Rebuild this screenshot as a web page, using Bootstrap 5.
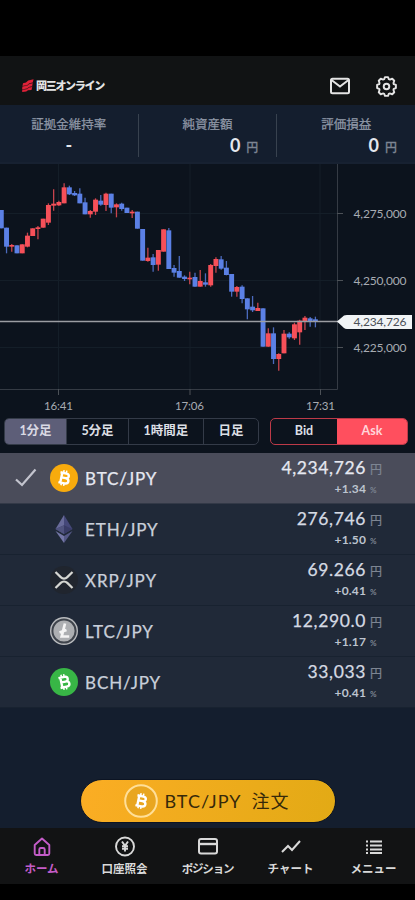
<!DOCTYPE html>
<html lang="ja">
<head>
<meta charset="utf-8">
<meta name="viewport" content="width=device-width, initial-scale=1">
<title>BTC/JPY</title>
<link href="https://cdn.jsdelivr.net/npm/bootstrap@5.3.0/dist/css/bootstrap.min.css" rel="stylesheet">
<style>
body{background:#000;color:#d5d9e2;font-family:Lato,"Noto Sans CJK JP",sans-serif;line-height:1;height:900px;overflow:hidden}
.app{height:884px;padding-top:56px;background:#000}
.topbar{height:49px;background:#111314;padding:11px 17px 0 22px}
.brand-name{font:900 11px/14px "Noto Sans CJK JP",sans-serif;letter-spacing:-1.3px;color:#e4e4e4;margin-left:2px;margin-top:-2px}
.mail,.gear{margin-top:8px}
.summary{height:57px;background:#141e2e}
.summary-cell{width:138.5px;padding-top:12px}
.rule{width:1px;height:43px;margin-top:9px;background:#38424f}
.s-label{font-size:12.5px;line-height:16px;color:#8f97a6;text-align:center;-webkit-text-stroke:.25px #8f97a6}
.s-value{font-size:18px;line-height:20px;margin-top:2px;color:#e4e7ed;font-weight:700;padding-right:18px}
.s-value small{font-size:12px;color:#7d8593;font-weight:500;margin-left:6px;-webkit-text-stroke:.25px #7d8593}
.chart-area{height:250px;background:#0c131d;border-top:2px solid #172131}
.chart-area text{font-family:Lato,sans-serif;fill:#a7abb2}
.controls{height:41px;background:#0c131d;padding:6px 7px 0 4px}
.seg{height:27px;border:1px solid #343b48;border-radius:5px;overflow:hidden;font-size:12.5px;color:#dcdfe5;font-weight:700}
.seg>div{border-right:1px solid #343b48;display:flex;align-items:center;justify-content:center}
.seg>div:last-child{border-right:0}
.seg .chosen{background:#5d5e78;color:#d9d9e4}
.w-min1{width:62px}.w-hour{width:75px}.w-day{width:54px}
.side{border:1.5px solid #bd3a48;width:138px}
.side>.bid{width:66px;border:0}
.side>.picked{flex:1;background:#ff4f5e;color:#ffd5da}
.pair{height:51px;background:#202938;border-bottom:1px solid #182230;padding-right:32px}
.pair.selected{background:#4a4c5a;border-color:#333947}
.tick{width:50px;padding-left:14px}
.coin{width:28px;height:28px;display:block}
.pair-name{font-size:17px;letter-spacing:.9px;margin-left:7px;color:#c9cfda;-webkit-text-stroke:.25px currentColor}
.selected .pair-name,.selected .price{color:#e6e8f1}
.price{font-size:17.5px;line-height:20px;letter-spacing:.62px;color:#d5dae3;height:21px;-webkit-text-stroke:.25px currentColor}
.rate{font-size:12px;line-height:16px;font-weight:700;color:#bdc4cf;margin-top:2px;letter-spacing:.15px}
.unit{display:inline-block;width:17px;padding-left:4px;font-size:12px;letter-spacing:0;color:#7d8592;text-align:left}
.pct{font-size:8px}
.order-area{height:120px;background:#141e2e;padding-top:71px}
.order{width:256px;height:44px;border-radius:22px;border:1px solid #0c1423;background:linear-gradient(105deg,#fbad24,#e2aa15);color:#35290a;font-size:18px;letter-spacing:1px;padding:0 0 0 43px}
.order-pair{margin-left:7px}.order-verb{margin-left:10px}
.tabs-bottom{height:56px;background:#121314;color:#d9d9d9;font-weight:700;font-size:11.5px}
.tabs-bottom>div{width:20%;padding-top:8px}
.tabs-bottom svg{display:block;width:22px;height:22px;margin-bottom:4px}
.tabs-bottom span{line-height:14px;white-space:nowrap}
.tabs-bottom .tight{letter-spacing:-1.2px}
.tabs-bottom .now{color:#c45cc8}
</style>
<script src="https://cdn.jsdelivr.net/npm/bootstrap@5.3.0/dist/js/bootstrap.bundle.min.js"></script>
</head>
<body>
<svg class="d-none">
  <symbol id="btc" viewBox="0 0 16 16"><g fill="none" stroke="currentColor" transform="rotate(12 8 8)"><path d="M5.8 3.9v8.200M4.300 4.100h4.900c3 0 3 3.800 0 3.800H6M9.200 7.900c3.700 0 3.700 4.200 0 4.200H4.300" stroke-width="1.900"/><path d="M6.800 1.800v2.400M9 1.800v2.400M6.800 11.800v2.400M9 11.800v2.400" stroke-width="1.250"/></g></symbol>
</svg>
<main class="app">
  <header class="topbar d-flex align-items-start">
    <div class="d-flex align-items-center mt-2 pt-1">
      <svg width="12" height="13" viewBox="0 0 12 13"><path d="M1 4.2 4 3.5 6.2 1.4 11.6.3 10.7 3.4 7.3 4.2 5.400 6 .5 7ZM.4 7.600l5-1L7.400 5l3.300-.8-.6 3L6.800 8 5 9.600.1 10.500ZM.2 11l5-1L7 8.600l3.200-.7-.7 3L6 11.300 4.300 12.600.2 13Z" fill="#df2238"/><path d="m1 7.300 4.400-.9L7.200 5l3.800-.9M.5 10.800l4.700-1L7 8.400l3.500-.8" stroke="#8a1a2a" stroke-width=".5" fill="none"/></svg>
      <div class="brand-name">岡三オンライン</div>
    </div>
    <svg class="mail ms-auto" width="22" height="22" viewBox="0 0 22 22" fill="none" stroke="#e4e4e4" stroke-width="2"><rect x="2" y="3.700" width="18" height="14.600" rx="1.500"/><path d="m2.500 5 8.500 6.500L19.500 5"/></svg>
    <svg class="gear ms-4" width="23" height="23" viewBox="0 0 24 24" fill="none" stroke="#e4e4e4" stroke-width="2"><circle cx="12" cy="12" r="2.900"/><path stroke-linejoin="round" d="M10.400 2.200h3.200l.8 2.200q.9.500 1.700.2l1.900-.7 2.100 2.100-.7 1.900q-.3.800.2 1.700l2.200.8v3.200l-2.200.8q-.5.900-.2 1.700l.7 1.900-2.100 2.100-1.900-.7q-.8-.3-1.700.2l-.8 2.200h-3.200l-.8-2.200q-.9-.5-1.700-.2l-1.900.7-2.100-2.100.7-1.900q.3-.8-.2-1.700l-2.200-.8v-3.200l2.200-.8q.5-.9.2-1.700l-.7-1.900 2.100-2.100 1.900.7q.8.300 1.700-.2Z"/></svg>
  </header>

  <section class="summary d-flex">
    <div class="summary-cell"><div class="s-label">証拠金維持率</div><div class="s-value text-center p-0">-</div></div>
    <div class="rule"></div>
    <div class="summary-cell"><div class="s-label">純資産額</div><div class="s-value text-end">0<small>円</small></div></div>
    <div class="rule"></div>
    <div class="summary-cell"><div class="s-label">評価損益</div><div class="s-value text-end">0<small>円</small></div></div>
  </section>

  <section class="chart-area">
    <svg class="d-block" width="415" height="248" viewBox="0 164 415 248">
      <path d="M58.500 164V389M190 164V389M320 164V389M0 213.500H337M0 280.500H337M0 347.500H337" stroke="#141e28" fill="none"/>
      <path d="M337.500 164V389.500H0" stroke="#353b44" fill="none"/>
      <path d="M337 213.500h6M337 280.500h6M337 347.500h6M58.500 389v6M190 389v6M320.500 389v6" stroke="#4c5157" fill="none"/>
      <g id="candles"></g>
      <path d="M0 321.500H340" stroke="#9b9da2" stroke-width="1.300"/>
      <path d="M337 321.500 344 315.500Q345 315 347 315H412V329H347Q345 329 344 328Z" fill="#f1f4f6"/>
      <g font-size="12">
        <text x="353.500" y="217.500" textLength="53">4,275,000</text>
        <text x="353.500" y="284.500" textLength="53">4,250,000</text>
        <text x="353.500" y="351.800" textLength="53">4,225,000</text>
        <text x="353.500" y="325.800" textLength="53" style="fill:#4a4f57">4,234,726</text>
      </g>
      <g font-size="11.500">
        <text x="44" y="409.500" textLength="29">16:41</text>
        <text x="175" y="409.500" textLength="29">17:06</text>
        <text x="306" y="409.500" textLength="29">17:31</text>
      </g>
    </svg>
  </section>

  <section class="controls d-flex justify-content-between">
    <div class="seg d-flex">
      <div class="chosen w-min1">1分足</div><div class="w-min1">5分足</div><div class="w-hour">1時間足</div><div class="w-day">日足</div>
    </div>
    <div class="seg side d-flex"><div class="bid">Bid</div><div class="picked">Ask</div></div>
  </section>

  <section>
    <div class="pair selected d-flex align-items-center">
      <div class="tick"><svg class="d-block" width="24" height="20" viewBox="0 0 24 20"><path d="m2 11.500 6 5.500L21.500 1.500" fill="none" stroke="#c3c4ce" stroke-width="2.200"/></svg></div>
      <svg class="coin" viewBox="0 0 28 28"><circle cx="14" cy="14" r="14" fill="#f8ab0d"/><use href="#btc" x="4" y="4" width="20" height="20" color="#fff"/></svg>
      <div class="pair-name">BTC/JPY</div>
      <div class="ms-auto text-end"><div class="price">4,234,726<span class="unit">円</span></div><div class="rate">+1.34<span class="unit pct">%</span></div></div>
    </div>
    <div class="pair d-flex align-items-center">
      <div class="tick"></div>
      <svg class="coin" viewBox="0 0 28 28"><path d="m14 0-8.500 14L14 19Z" fill="#686b9a"/><path d="m14 0 8.500 14L14 19Z" fill="#454879"/><path d="M5.500 14 14 10.300 22.500 14 14 19Z" fill="#393c67"/><path d="M5.500 14 14 10.300V19Z" fill="#50547f"/><path d="m5.500 16 8.500 5v7Z" fill="#7477a7"/><path d="m22.500 16-8.500 5v7Z" fill="#555987"/></svg>
      <div class="pair-name">ETH/JPY</div>
      <div class="ms-auto text-end"><div class="price">276,746<span class="unit">円</span></div><div class="rate">+1.50<span class="unit pct">%</span></div></div>
    </div>
    <div class="pair d-flex align-items-center">
      <div class="tick"></div>
      <svg class="coin" viewBox="0 0 28 28"><circle cx="14" cy="14" r="14" fill="#20252e"/><path d="m5.500 6 5.200 5.100c1.900 1.900 4.700 1.900 6.600 0L22.500 6M5.500 22l5.200-5.100c1.900-1.900 4.700-1.900 6.600 0L22.500 22" fill="none" stroke="#d6d7d3" stroke-width="2.200"/></svg>
      <div class="pair-name">XRP/JPY</div>
      <div class="ms-auto text-end"><div class="price">69.266<span class="unit">円</span></div><div class="rate">+0.41<span class="unit pct">%</span></div></div>
    </div>
    <div class="pair d-flex align-items-center">
      <div class="tick"></div>
      <svg class="coin" viewBox="0 0 28 28"><circle cx="14" cy="14" r="14" fill="#b9bbbe"/><circle cx="14" cy="14" r="11.600" fill="#adafb2" stroke="#3f444c" stroke-width="2"/><path d="m15 6.500-3.300 13h7.500M9.500 15.500l7-2.500" fill="none" stroke="#f4f4f4" stroke-width="2.700"/></svg>
      <div class="pair-name">LTC/JPY</div>
      <div class="ms-auto text-end"><div class="price">12,290.0<span class="unit">円</span></div><div class="rate">+1.17<span class="unit pct">%</span></div></div>
    </div>
    <div class="pair d-flex align-items-center">
      <div class="tick"></div>
      <svg class="coin" viewBox="0 0 28 28"><circle cx="14" cy="14" r="14" fill="#38b646"/><use href="#btc" x="4" y="4" width="20" height="20" color="#fff" transform="rotate(-24 14 14)"/></svg>
      <div class="pair-name">BCH/JPY</div>
      <div class="ms-auto text-end"><div class="price">33,033<span class="unit">円</span></div><div class="rate">+0.41<span class="unit pct">%</span></div></div>
    </div>
  </section>

  <section class="order-area d-flex justify-content-center align-items-start">
    <button class="order d-flex align-items-center"><svg width="34" height="34" viewBox="0 0 34 34"><circle cx="17" cy="17" r="15.800" fill="#e9a620" stroke="#ffdf98" stroke-width="2"/><use href="#btc" x="7" y="7" width="20" height="20" color="#fff"/></svg><span class="order-pair">BTC/JPY</span><span class="order-verb">注文</span></button>
  </section>

  <nav class="tabs-bottom d-flex text-center">
    <div class="now d-flex flex-column align-items-center"><svg viewBox="0 0 22 22" fill="none" stroke="currentColor" stroke-width="1.900" stroke-linejoin="round"><path d="M3.700 9 11 2.500 18.300 9v8.500q0 1.500-1.500 1.500H5.200q-1.500 0-1.500-1.500ZM8.300 19v-5.500q0-1.500 1.500-1.500h2.400q1.500 0 1.500 1.500V19"/></svg><span>ホーム</span></div>
    <div class="d-flex flex-column align-items-center"><svg viewBox="0 0 22 22" fill="none" stroke="currentColor" stroke-width="1.900"><circle cx="11" cy="10.500" r="9"/><path d="m8 5.500 3 4.300 3-4.300M11 9.800v5.700M8 10.200h6M8 12.800h6" stroke-width="1.900"/></svg><span>口座照会</span></div>
    <div class="d-flex flex-column align-items-center"><svg viewBox="0 0 22 22" fill="none" stroke="currentColor" stroke-width="2"><rect x="2" y="3" width="18" height="14.500" rx="2"/><path d="M2 8h18" stroke-width="2.400"/></svg><span class="tight">ポジション</span></div>
    <div class="d-flex flex-column align-items-center"><svg viewBox="0 0 22 22" fill="none" stroke="currentColor" stroke-width="2"><path d="m2 16 6-6 4 4 8-9"/></svg><span>チャート</span></div>
    <div class="d-flex flex-column align-items-center"><svg viewBox="0 0 22 22" fill="none" stroke="currentColor" stroke-width="2"><path d="M3 5.500h2M3 9.500h2M3 13.500h2M3 17h2M7 5.500h12M7 9.500h12M7 13.500h12M7 17h12" stroke-width="1.900"/></svg><span>メニュー</span></div>
  </nav>
</main>
<script>
// Each candle: direction, body top, body bottom, wick top, wick bottom (thirds of a pixel below y = 160).
const series = [
['b',150,205],['b',203,260,203,280],['r',255,260,252,275],['b',256,280],['r',253,280],['r',227,260,218,262],['r',205,228],['r',202,207,198,238],['r',176,203],['r',135,188,130,195],['r',131,137,88,152],['r',126,136,122,138],['r',82,130,70,130],['b',82,103,77,105],['b',99,106,93,108],['b',101,130,85,130],['b',127,163,113,163],['r',153,163,150,173],['r',119,155,115,165],['b',122,134,105,137],['r',101,135,98,153],['b',101,143,101,160],['r',133,142,130,172],['b',131,147,128,152],['b',143,159],['r',155,160,150,174],
['b',155,206],['b',207,302],['r',293,303,263,305],['b',292,315,282,335],['r',270,314,270,332],['r',208,275],['b',211,327,204,327],['b',324,338,315,350],['b',333,353,288,353],['b',350,357,346,363],['r',353,358,335,373],['b',351,380,338,380],['r',363,380,330,380],['b',367,374,340,380],['r',315,376,312,380],['r',297,318,292,338],['b',298,326,288,329],['b',323,345,303,346],['b',342,395,342,410],['r',381,395,378,410],['b',380,417,376,430],
['b',415,448,415,478],['b',440,451,408,456],['r',444,453,428,453],['b',445,560],['r',520,560,505,560],['b',520,597,502,612],['r',582,597,580,632],['r',521,580,510,580],['b',521,532,517,536],['r',493,535,488,540],['r',482,517,479,554],['r',473,486,468,510],['b',475,486,471,500],['b',478,486,470,502]];
const y = v => 160 + v / 3;
document.getElementById('candles').innerHTML = series.map(([d, t, b, wt = t, wb = b], i) => {
  const x = 1.300 + i * 5.235, c = d === 'r' ? '#f65059' : '#5b80e5';
  return `<path d="M${x} ${y(wt)}V${y(wb)}" stroke="${c}" stroke-width="1.300" opacity=".8"/><rect x="${x - 2.450}" y="${y(t)}" width="4.900" height="${y(b) - y(t)}" fill="${c}"/>`;
}).join('');
</script>
</body>
</html>
